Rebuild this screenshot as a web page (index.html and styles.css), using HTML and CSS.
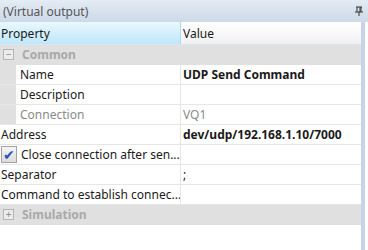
FILE: index.html
```html
<!DOCTYPE html>
<html lang="en">
<head>
  <meta charset="UTF-8" />
  <title>Virtual output</title>
  <link rel="stylesheet" href="styles.css">
</head>
<body>
  <div class="titlebar">
    <span>(Virtual output)</span>
    <svg class="pin" width="8" height="10" viewBox="0 0 8 10">
      <path d="M1 1h6M2 1v5M5 1v5M6 1v5M0 6h8M4 6v4" stroke="#333" stroke-width="1" fill="none"/>
    </svg>
  </div>

  <div class="body">
    <div class="grid">
      <div class="row header">
        <div class="name">Property</div>
        <div class="value">Value</div>
      </div>

      <div class="row category">
        <span class="toggle">&minus;</span>
        <span>Common</span>
      </div>
      <div class="row sub">
        <div class="name">Name</div>
        <div class="value bold">UDP Send Command</div>
      </div>
      <div class="row sub">
        <div class="name">Description</div>
        <div class="value"></div>
      </div>
      <div class="row sub disabled">
        <div class="name">Connection</div>
        <div class="value">VQ1</div>
      </div>

      <div class="row">
        <div class="name">Address</div>
        <div class="value bold">dev/udp/192.168.1.10/7000</div>
      </div>
      <div class="row check-row">
        <div class="name">
          <span class="check">&#10004;</span>
          Close connection after sen...
        </div>
        <div class="value"></div>
      </div>
      <div class="row">
        <div class="name">Separator</div>
        <div class="value">;</div>
      </div>
      <div class="row">
        <div class="name">Command to establish connec...</div>
        <div class="value"></div>
      </div>

      <div class="row category">
        <span class="toggle">+</span>
        <span>Simulation</span>
      </div>
    </div>
    <div class="scroll"></div>
  </div>
</body>
</html>
```

FILE: styles.css
```css
body {
  margin: 0;
  width: 368px;
  height: 250px;
  overflow: hidden;
  font-family: "Noto Sans", "Open Sans", sans-serif;
  font-size: 12px;
  color: #1a1a1a;
  background: #fff;
}

.titlebar {
  height: 22px;
  display: flex;
  align-items: center;
  justify-content: space-between;
  padding: 0 5px 0 3px;
  background: linear-gradient(#e4ecf4, #ccd9e7);
  color: #555;
}

.body {
  display: flex;
  height: 228px;
}

.grid {
  flex: 1;
}

.scroll {
  width: 4px;
  margin-right: 3px;
  background: #c8d3ea;
}

.row {
  display: flex;
  height: 19px;
  border-bottom: 1px solid #e6e6e6;
}

.name {
  width: 181px;
  box-sizing: border-box;
  padding-left: 1px;
  display: flex;
  align-items: center;
  white-space: nowrap;
  overflow: hidden;
  border-right: 1px solid #e6e6e6;
}

.value {
  flex: 1;
  display: flex;
  align-items: center;
  padding-left: 2px;
}

.bold {
  font-weight: bold;
}

.header {
  height: 22px;
  border-bottom: 1px solid #d9e6ee;
}

.header .name {
  background: linear-gradient(#e9f8fe, #bfe7fa);
  border-right: 1px solid #a8dcf5;
}

.header .value {
  background: linear-gradient(#ffffff, #f1f1f1);
}

.category {
  background: #e0e0e0;
  align-items: center;
  gap: 8px;
  padding-left: 3px;
  color: #a9a9a9;
  font-weight: bold;
  border-bottom: 1px solid #e0e0e0;
}

.toggle {
  width: 9px;
  height: 9px;
  border: 1px solid #b4b4b4;
  background: #ececec;
  color: #8c8c8c;
  font-size: 10px;
  line-height: 8px;
  text-align: center;
  font-weight: normal;
}

.sub {
  background: #e0e0e0;
}

.sub .name {
  margin-left: 16px;
  width: 165px;
  padding-left: 4px;
  background: #fff;
}

.sub .value {
  background: #fff;
}

.disabled {
  color: #8a8a8a;
}

.check-row .name {
  gap: 4px;
}

.check {
  width: 14px;
  height: 15px;
  border: 1px solid #a3a3a3;
  background: linear-gradient(#f4f4f4, #dcdcdc);
  color: #2a52b8;
  font-size: 14px;
  line-height: 15px;
  text-align: center;
}
```
